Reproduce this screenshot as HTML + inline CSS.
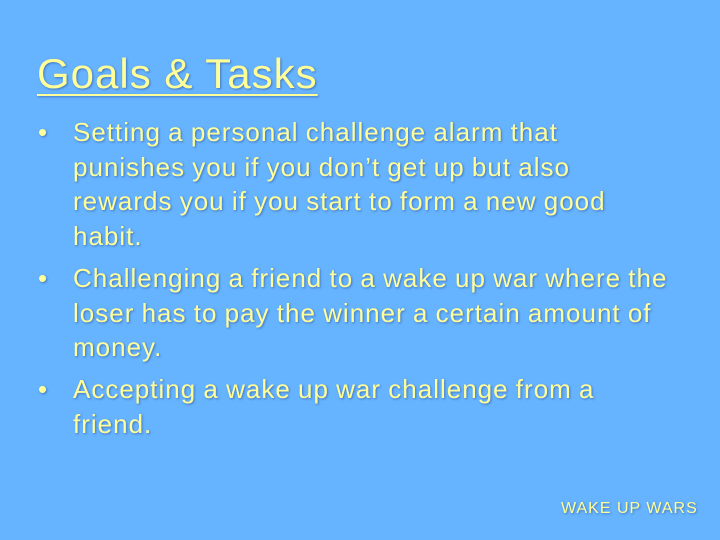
<!DOCTYPE html>
<html><head><style>
html,body{margin:0;padding:0}
body{width:720px;height:540px;background:#66b3ff;position:relative;overflow:hidden;font-family:"Liberation Sans",sans-serif;color:#ffff99;text-shadow:1px 1px 2px rgba(0,0,60,0.35)}
.t{position:absolute;left:37px;top:50px;font-size:42px;letter-spacing:1px;text-decoration:underline;text-decoration-thickness:2px;text-underline-offset:6px;white-space:nowrap}
.b{position:absolute;left:73px;font-size:26px;letter-spacing:1px;word-spacing:-1px;line-height:34.5px;white-space:nowrap}
.b:before{content:"•";position:absolute;left:-35px}
.f{position:absolute;left:561px;top:500px;font-size:16px;letter-spacing:1px}
</style></head><body>
<div class="t">Goals &amp; Tasks</div>
<div class="b" style="top:115px">Setting a personal challenge alarm that<br>punishes you if you don’t get up but also<br>rewards you if you start to form a new good<br>habit.</div>
<div class="b" style="top:261px">Challenging a friend to a wake up war where the<br>loser has to pay the winner a certain amount of<br>money.</div>
<div class="b" style="top:372px">Accepting a wake up war challenge from a<br>friend.</div>
<div class="f">WAKE UP WARS</div>
</body></html>
